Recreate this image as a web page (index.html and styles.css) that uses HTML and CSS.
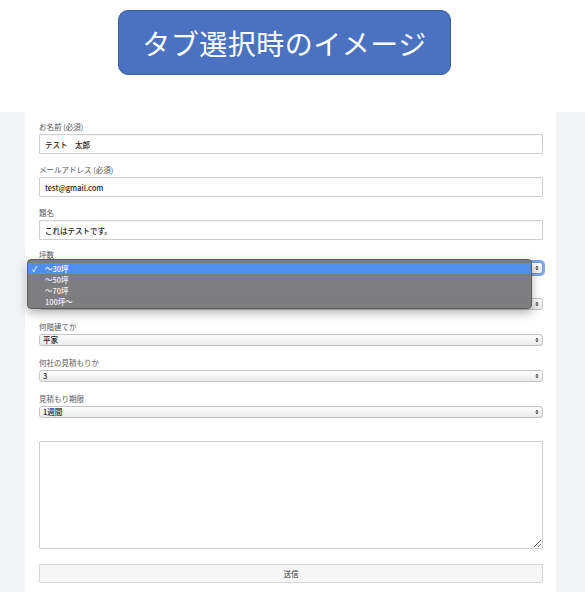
FILE: index.html
```html
<!DOCTYPE html>
<html lang="ja">
<head>
<meta charset="utf-8">
<title>タブ選択時のイメージ</title>
<link rel="stylesheet" href="styles.css">
</head>
<body>
<header class="hero">
  <div class="pill">タブ選択時のイメージ</div>
</header>
<main class="stage">
  <form class="card">
    <div class="field">
      <label class="lbl">お名前 (必須)</label>
      <input class="txt" type="text" value="テスト　太郎">
    </div>
    <div class="field">
      <label class="lbl">メールアドレス (必須)</label>
      <input class="txt" type="text" value="test@gmail.com">
    </div>
    <div class="field">
      <label class="lbl">題名</label>
      <input class="txt" type="text" value="これはテストです。">
    </div>
    <div class="sfield open">
      <label class="lbl">坪数</label>
      <select class="sel focus"><option>〜30坪</option></select>
      <ul class="menu">
        <li class="opt on"><span class="chk">✓</span>〜30坪</li>
        <li class="opt"><span class="chk"></span>〜50坪</li>
        <li class="opt"><span class="chk"></span>〜70坪</li>
        <li class="opt"><span class="chk"></span>100坪〜</li>
      </ul>
    </div>
    <div class="sfield">
      <label class="lbl"></label>
      <select class="sel"><option></option></select>
    </div>
    <div class="sfield">
      <label class="lbl">何階建てか</label>
      <select class="sel"><option>平家</option></select>
    </div>
    <div class="sfield">
      <label class="lbl">何社の見積もりか</label>
      <select class="sel"><option>3</option></select>
    </div>
    <div class="sfield">
      <label class="lbl">見積もり期限</label>
      <select class="sel"><option>1週間</option></select>
    </div>
    <textarea class="area"></textarea>
    <button class="send" type="button">送信</button>
  </form>
</main>
</body>
</html>
```

FILE: styles.css
```css
* { box-sizing: border-box; }
html, body { margin: 0; padding: 0; }
body {
  background: #ffffff;
  font-family: "Noto Sans CJK JP", "Noto Sans", "Liberation Sans", sans-serif;
  color: #222;
  width: 585px;
}
.hero {
  height: 112px;
  padding-top: 10px;
  padding-left: 118px;
}
.pill {
  width: 333px;
  height: 65px;
  background: #4a72c0;
  border: 1px solid #3a5c9c;
  border-radius: 10px;
  color: #ffffff;
  font-size: 28px;
  font-weight: 400;
  display: flex;
  align-items: center;
  justify-content: center;
  letter-spacing: 0.5px;
}
.stage {
  background: #f2f3f5;
  padding: 0 29px 0 25px;
  height: 480px;
}
.card {
  background: #ffffff;
  height: 480px;
  padding: 8px 13px 9px 14px;
  display: flex;
  flex-direction: column;
}
.lbl {
  display: block;
  height: 14px;
  line-height: 14px;
  font-size: 7.5px;
  color: #555;
}
.field { margin-bottom: 9px; }
.txt {
  display: block;
  width: 100%;
  height: 20px;
  border: 1px solid #cfcfcf;
  border-radius: 1px;
  padding: 0 5px;
  font-family: inherit;
  font-size: 7.5px;
  font-weight: 500;
  color: #222;
  background: #fff;
  outline: none;
  box-shadow: inset 0 1px 1px rgba(0,0,0,0.04);
}
.sfield {
  position: relative;
  margin-bottom: 11px;
}
.sfield .lbl { height: 13px; line-height: 12px; }
.sel {
  display: block;
  width: 100%;
  height: 12px;
  -webkit-appearance: none;
  appearance: none;
  border: 1px solid #c4c4c4;
  border-radius: 3px;
  padding: 0 0 0 3px;
  font-family: inherit;
  font-size: 7.5px;
  font-weight: 500;
  line-height: 10px;
  color: #222;
  background-color: #f4f4f4;
  background-image:
    url("data:image/svg+xml;utf8,<svg xmlns='http://www.w3.org/2000/svg' width='6' height='8' viewBox='0 0 6 8'><path d='M3 0.5 L5.5 3.2 H0.5 Z M3 7.5 L0.5 4.8 H5.5 Z' fill='%23333'/></svg>"),
    linear-gradient(#fdfdfd, #e9e9e9);
  background-repeat: no-repeat, no-repeat;
  background-position: right 3px center, 0 0;
  background-size: 4px 6px, 100% 100%;
  outline: none;
}
.sel.focus {
  box-shadow: 0 0 0 2px #7aa7ee;
  border-color: #6f9de8;
}
.menu {
  position: absolute;
  left: -12px;
  top: 10px;
  width: 505px;
  height: 50px;
  margin: 0;
  padding: 3px 0;
  list-style: none;
  background: rgba(122, 122, 124, 0.97);
  border: 1px solid #5e5e60;
  border-radius: 4px;
  box-shadow: 0 4px 10px rgba(0,0,0,0.3);
  z-index: 5;
}
.opt {
  height: 11px;
  line-height: 11px;
  font-size: 7.5px;
  font-weight: 500;
  color: #f2f2f2;
  display: flex;
  align-items: center;
}
.opt.on { background: #5090ec; color: #fff; }
.chk {
  width: 17px;
  padding-left: 4px;
  font-size: 8px;
  font-weight: 400;
}
.area {
  display: block;
  width: 100%;
  height: 108px;
  margin-top: 12px;
  border: 1px solid #cfcfcf;
  border-radius: 1px;
  background: #fff;
  resize: both;
  outline: none;
}
.send {
  display: block;
  width: 100%;
  height: 19px;
  margin-top: 15px;
  border: 1px solid #d6d6d6;
  border-radius: 1px;
  background: #f6f6f6;
  font-family: inherit;
  font-size: 7.5px;
  color: #333;
  padding: 0;
}
```
